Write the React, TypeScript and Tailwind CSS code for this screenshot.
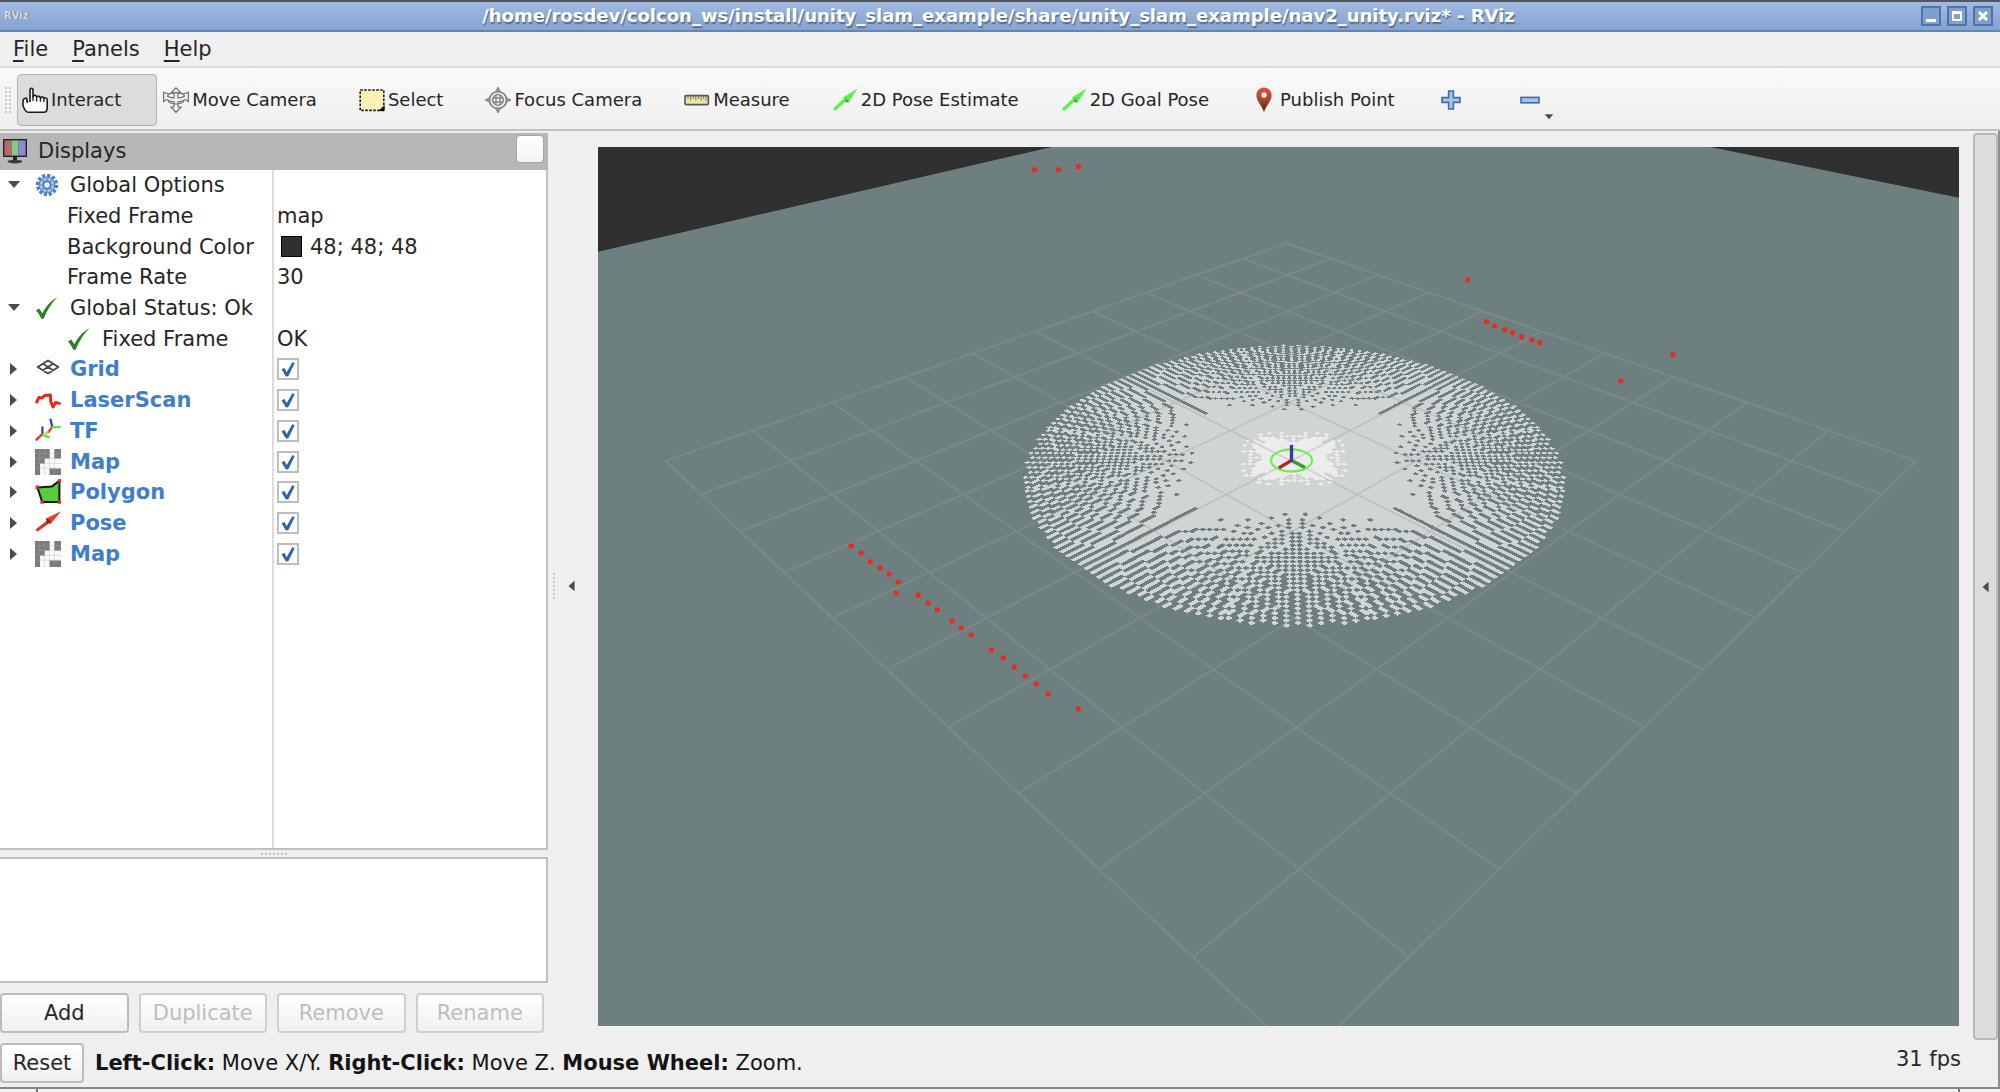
import type { ReactNode } from 'react';
import clsx from 'clsx';

// Ground plane projection. The camera looks along the diagonal of the grid,
// x and y are in metres with the origin in the middle of the grid.
function project(x: number, y: number): [number, number] {
  const s = 10 + x + y;
  const t = x - y;
  const k = 1 / (0.002151 - 0.00006854 * s);
  return [(2.7662 - 0.0875 * s + 0.0916 * t) * k, k - 221.3];
}

const CELL = 0.05;
const RAYS = 180;
const RANGE = 59.5;
const ORIGIN_X = -1;
const ORIGIN_Y = -2;

function castRays() {
  const hits = new Map<string, number>();
  for (let n = 0; n < RAYS; n++) {
    const a = ((n + 0.5) / RAYS) * Math.PI * 2;
    const ex = Math.round(Math.cos(a) * RANGE);
    const ey = Math.round(Math.sin(a) * RANGE);
    let cx = 0;
    let cy = 0;
    const dx = Math.abs(ex);
    const dy = Math.abs(ey);
    const sx = ex > 0 ? 1 : -1;
    const sy = ey > 0 ? 1 : -1;
    let err = dx - dy;
    while (true) {
      const key = `${cx},${cy}`;
      hits.set(key, (hits.get(key) ?? 0) + 1);
      if (cx === ex && cy === ey) break;
      const e2 = err * 2;
      if (e2 > -dy) {
        err -= dy;
        cx += sx;
      }
      if (e2 < dx) {
        err += dx;
        cy += sy;
      }
    }
  }
  return hits;
}

function cellPath(cx: number, cy: number) {
  const x = (cx + ORIGIN_X) * CELL;
  const y = (cy + ORIGIN_Y) * CELL;
  const pts = [project(x, y), project(x + CELL, y), project(x + CELL, y + CELL), project(x, y + CELL)];
  return 'M' + pts.map((p) => `${p[0].toFixed(1)} ${p[1].toFixed(1)}`).join('L') + 'Z';
}

const hits = castRays();
let freePath = '';
let clearPath = '';
hits.forEach((count, key) => {
  const [cx, cy] = key.split(',').map(Number);
  freePath += cellPath(cx, cy);
  if (count >= 3) clearPath += cellPath(cx, cy);
});

let gridPath = '';
for (let i = -5; i <= 5; i++) {
  const ends = [project(i, -5), project(i, 5), project(-5, i), project(5, i)];
  gridPath += `M${ends[0].join(' ')}L${ends[1].join(' ')}M${ends[2].join(' ')}L${ends[3].join(' ')}`;
}

const laserPoints = [
  [1034, 170], [1058, 170], [1078, 167], [1467, 280], [1486, 322], [1494, 326], [1504, 330], [1512, 333],
  [1521, 337], [1531, 340], [1539, 343], [1620, 381], [1672, 355], [851, 546], [861, 553], [870, 562],
  [880, 568], [889, 574], [898, 582], [896, 593], [918, 595], [928, 603], [937, 610], [952, 621],
  [961, 628], [971, 635], [991, 650], [1003, 658], [1014, 667], [1025, 676], [1036, 684], [1048, 694],
  [1078, 709],
];

function Scene() {
  return (
    <svg
      viewBox="598 147 1360 879"
      preserveAspectRatio="xMidYMid slice"
      className="block w-full h-full bg-[#6d807f]">
      <path d="M598 147H1053L598 252Z M1708 147H1958V198Z" fill="#303030" />
      <path d={freePath} fill="#d0d4d5" shapeRendering="crispEdges" />
      <path d={clearPath} fill="#ececec" shapeRendering="crispEdges" />
      <path d={gridPath} fill="none" stroke="#9c9a96" strokeOpacity="0.32" strokeWidth="1.8" />
      {laserPoints.map(([x, y]) => (
        <rect key={`${x}-${y}`} x={x - 2.5} y={y - 2.5} width="5" height="5" rx="1.5" fill="#ea2c20" />
      ))}
      <ellipse cx="1291" cy="460.5" rx="20.5" ry="11" fill="none" stroke="#6bf04a" strokeWidth="2.2" />
      <g strokeWidth="3.4">
        <path d="M1291 460.5L1304.5 467.5" stroke="#3a9a35" />
        <path d="M1291 460.5L1278.5 468" stroke="#b52024" />
        <path d="M1291 461.5V445" stroke="#3a3aa0" />
      </g>
    </svg>
  );
}

/* toolbar icons */

const HandIcon = () => (
  <svg viewBox="0 0 26 26" className="size-[26px] shrink-0">
    <path
      d="M8 15V3.2C8 .6 11 .6 11 3.2V10L11.5 8.6C13 7.8 14.6 8.6 14.6 10C16 8.8 18.2 9.3 18.4 10.8C20 9.6 22 10 22 11.4C24 10.4 25.2 11.2 25.2 13V21C25.2 23.4 24 25.2 21.8 25.2H6C4.4 25.2 3.6 24 2.8 22.6L1 19V14.4C1 12 2.4 11 4.6 11.4L5.4 16"
      fill="#fafafa"
      stroke="#1d1d1d"
      strokeWidth="1.6"
      strokeLinejoin="round"
    />
    <path d="M11 9V14M14.6 10V14.6M18.4 11V14.8M22 11.6V15" stroke="#1d1d1d" strokeWidth="1.3" fill="none" />
  </svg>
);

const MoveIcon = () => (
  <svg viewBox="0 0 26 26" className="size-[26px] shrink-0" fill="none" stroke="#6c6c6c" strokeWidth="1.2">
    <path d="M13 .8L18 6H15V11C17.6 10.8 20 10.2 21.4 9.2L20.4 7L25.4 5.4V14.6L22.6 12.6C20.4 14 17.6 14.6 15 14.8V20H18L13 25.4L8 20H11V14.8C8.4 14.6 5.6 14 3.4 12.6L.6 14.6V5.4L5.6 7L4.6 9.2C6 10.2 8.4 10.8 11 11V6H8Z" fill="#f6f6f6" />
    <path d="M5 8C7 4.8 19 4.8 21 8M5 14C8 18 18 18 21 14" />
  </svg>
);

const SelectIcon = () => (
  <svg viewBox="0 0 26 26" className="size-[26px] shrink-0">
    <rect x="1.2" y="3" width="23.6" height="20.4" fill="#fbf3b4" stroke="#1a1a1a" strokeWidth="1.6" strokeDasharray="2.6 1.4" />
    <path d="M25.5 18V24H19.5Z" fill="#000" />
  </svg>
);

const FocusIcon = () => (
  <svg viewBox="0 0 26 26" className="size-[26px] shrink-0" fill="none" stroke="#868686" strokeWidth="1.5">
    <circle cx="13" cy="13" r="8.6" stroke="#777" fill="#f0f0f0" />
    <circle cx="13" cy="13" r="5.4" />
    <path d="M8 11H18M8 15H18M11 8V18M15 8V18" strokeWidth="1.3" />
    <path d="M13 .6L14.8 4.6H11.2ZM13 25.4L14.8 21.4H11.2ZM.6 13L4.6 11.2V14.8ZM25.4 13L21.4 11.2V14.8Z" fill="#ddd" />
  </svg>
);

const MeasureIcon = () => (
  <svg viewBox="0 0 26 26" className="size-[26px] shrink-0">
    <rect x="1" y="8.6" width="23.4" height="9" rx="1" fill="#eee3a0" stroke="#55565e" strokeWidth="1.6" />
    <path d="M4 9V12M6.6 9V13.4M9.2 9V12M11.8 9V13.4M14.4 9V12M17 9V13.4M19.6 9V12M22 9V13.4" stroke="#77757a" strokeWidth="1" />
  </svg>
);

const GoalArrowIcon = () => (
  <svg viewBox="0 0 26 26" className="size-[26px] shrink-0">
    <path d="M1 21.4L11.6 11.8L14 14.2L3 24Z" fill="#5af447" />
    <path d="M11 10.4L25.4 1.6L16.6 15.8L13.8 13.6Z" fill="#5cf04a" />
    <path d="M11 10.4L13.6 12L13 14.6L16.6 15.8L15 12Z" fill="#37a12e" />
  </svg>
);

const PinIcon = () => (
  <svg viewBox="0 0 26 26" className="size-[26px] shrink-0">
    <defs>
      <linearGradient id="pin" x1="0" y1="0" x2="0" y2="1">
        <stop offset="0" stopColor="#d8563c" />
        <stop offset="0.5" stopColor="#a8452f" />
        <stop offset="1" stopColor="#4a2818" />
      </linearGradient>
    </defs>
    <path d="M13 25.4C12 20 5.4 14.6 5.4 8.2C5.4 3.8 8.8.6 13 .6S20.6 3.8 20.6 8.2C20.6 14.6 14 20 13 25.4Z" fill="url(#pin)" />
    <circle cx="13" cy="8" r="2.7" fill="#f6f1ee" />
  </svg>
);

const PlusIcon = () => (
  <svg viewBox="0 0 20 20" className="size-5">
    <path d="M7.6 1H12.4V7.6H19V12.4H12.4V19H7.6V12.4H1V7.6H7.6Z" fill="#a9c3e4" stroke="#3b6cab" strokeWidth="1.6" />
  </svg>
);

const MinusIcon = () => (
  <svg viewBox="0 0 20 20" className="size-5">
    <rect x="1" y="7.4" width="18" height="5.4" fill="#a9c3e4" stroke="#3b6cab" strokeWidth="1.6" />
  </svg>
);

/* tree icons */

const MonitorIcon = () => (
  <svg viewBox="0 0 26 26" className="size-[26px] shrink-0">
    <rect x="1" y="1" width="24" height="18" fill="#222" />
    <path d="M2.4 2.4H9.4V17.6H2.4Z" fill="#b86a6a" />
    <path d="M9.4 2.4H16.6V17.6H9.4Z" fill="#86c886" />
    <path d="M16.6 2.4H23.6V17.6H16.6Z" fill="#8a8ad8" />
    <path d="M11 19H15V22H11Z" fill="#222" />
    <ellipse cx="13" cy="23.6" rx="7.4" ry="1.8" fill="#3a3a3a" />
  </svg>
);

const GearIcon = () => (
  <svg viewBox="0 0 24 24" className="size-6 shrink-0">
    <circle cx="12" cy="12" r="9.4" fill="none" stroke="#4d80c2" strokeWidth="3.6" strokeDasharray="3.1 1.8" />
    <circle cx="12" cy="12" r="8" fill="#9dbfe8" stroke="#4a7dbf" strokeWidth="1" />
    <circle cx="12" cy="12" r="3.6" fill="#e8f0fa" stroke="#4a7dbf" strokeWidth="1.8" />
    <path d="M12 5V8M12 16V19M5 12H8M16 12H19M7 7L9 9M17 7L15 9M7 17L9 15M17 17L15 15" stroke="#5f8fcc" strokeWidth="1.2" />
  </svg>
);

const CheckIcon = () => (
  <svg viewBox="0 0 24 24" className="size-6 shrink-0">
    <path d="M1 14.4L4.2 12.4L7.4 17.2C11 10.4 15 5.6 22.6 1C16.4 7.6 12.6 13.4 8.6 22.8H6.2C5 19.6 3.4 17 1 14.4Z" fill="#2f7d27" />
  </svg>
);

const GridIcon = () => (
  <svg viewBox="0 0 26 26" className="size-[26px] shrink-0" fill="none" stroke="#484848" strokeWidth="1.8">
    <path d="M2.6 11L13 4.4L23.4 11L13 17.6ZM7.8 7.7L18.2 14.3M18.2 7.7L7.8 14.3" strokeLinejoin="round" />
  </svg>
);

const LaserIcon = () => (
  <svg viewBox="0 0 26 26" className="size-[26px] shrink-0" fill="none" stroke="#e9281c" strokeWidth="3" strokeLinejoin="round" strokeLinecap="round">
    <path d="M1.8 15L4 10.4L7 11L9.6 8.6L15.4 8L15.8 14.6L18 20L20.6 15.4L24.4 16.4" />
  </svg>
);

const TfIcon = () => (
  <svg viewBox="0 0 26 26" className="size-[26px] shrink-0" fill="none" strokeWidth="2.2">
    <path d="M7 16.4L.8 22.4M17 9L13 14.8" stroke="#e33126" />
    <path d="M7.4 16V8.4M17.2 8.6L15.4.8" stroke="#3a2fe0" />
    <path d="M7 16.6L14.6 19.4M17 9.2H25.6" stroke="#57e63a" />
    <path d="M13.4 13.4L10.4 16" stroke="#f2b233" />
  </svg>
);

const MapIcon = () => (
  <svg viewBox="0 0 26 26" className="size-[26px] shrink-0">
    <rect width="26" height="26" fill="#fafafa" />
    <path d="M4.8 0V26M9.6 0V26M14.4 0V26M19.2 0V26M0 4.8H26M0 9.6H26M0 14.4H26M0 19.2H26" stroke="#d6d6d6" strokeWidth="0.8" />
    <path d="M0 0H14.6V9.6H9.6V14.6H5V26H0ZM19.4 0H26V9.6H19.4ZM14.6 19.4H26V26H14.6Z" fill="#7c7c7c" />
    <path d="M4.8 0V14.4M9.6 0V9.6M0 4.8H14.4M0 9.6H9.6M0 14.4H4.8M0 19.2H4.8M19.4 4.8H26M19.2 19.4V26" stroke="#929292" strokeWidth="0.8" />
  </svg>
);

const PolygonIcon = () => (
  <svg viewBox="0 0 26 26" className="size-[26px] shrink-0">
    <path d="M2.4 8.4L17 7.4L24.4 1.8V23H7.2Z" fill="#57cc3c" stroke="#161616" strokeWidth="2" />
    <path d="M.6 6.6H4V10H.6ZM22.8.2H26V3.6H22.8ZM5.4 21.4H8.8V24.8H5.4ZM22.6 21.4H26V24.8H22.6Z" fill="#e9281c" />
  </svg>
);

const PoseIcon = () => (
  <svg viewBox="0 0 26 26" className="size-[26px] shrink-0">
    <path d="M.6 19.4L12 10.6L14 13.2L2.4 21.8Z" fill="#e0301f" />
    <path d="M11 8.6L26 1.2L15.8 13.8L13 12.4Z" fill="#ec3a26" />
    <path d="M11 8.6L14.4 9.8L15.8 13.8L11.8 12.6Z" fill="#8d1f14" />
  </svg>
);

function Triangle({ dir, className }: { dir: 'down' | 'right' | 'left'; className?: string }) {
  const d = { down: 'M1 3H13L7 10Z', right: 'M3 1L10 7L3 13Z', left: 'M10 1L3 7L10 13Z' }[dir];
  return (
    <svg viewBox="0 0 14 14" className={clsx('shrink-0', className ?? 'size-[14px]')}>
      <path d={d} fill="#4b4b4b" />
    </svg>
  );
}

const tools: { label: string; icon: ReactNode; active?: boolean }[] = [
  { label: 'Interact', icon: <HandIcon />, active: true },
  { label: 'Move Camera', icon: <MoveIcon /> },
  { label: 'Select', icon: <SelectIcon /> },
  { label: 'Focus Camera', icon: <FocusIcon /> },
  { label: 'Measure', icon: <MeasureIcon /> },
  { label: '2D Pose Estimate', icon: <GoalArrowIcon /> },
  { label: '2D Goal Pose', icon: <GoalArrowIcon /> },
  { label: 'Publish Point', icon: <PinIcon /> },
];

type Row = {
  label: string;
  icon?: ReactNode;
  arrow?: 'down' | 'right';
  value?: ReactNode;
  display?: boolean;
  nested?: boolean;
};

const rows: Row[] = [
  { label: 'Global Options', icon: <GearIcon />, arrow: 'down' },
  { label: 'Fixed Frame', value: 'map' },
  {
    label: 'Background Color',
    value: (
      <>
        <span className="size-[21px] ml-1 mr-2 bg-[#303030] border border-black" />
        48; 48; 48
      </>
    ),
  },
  { label: 'Frame Rate', value: '30' },
  { label: 'Global Status: Ok', icon: <CheckIcon />, arrow: 'down' },
  { label: 'Fixed Frame', icon: <CheckIcon />, nested: true, value: 'OK' },
  { label: 'Grid', icon: <GridIcon />, arrow: 'right', display: true },
  { label: 'LaserScan', icon: <LaserIcon />, arrow: 'right', display: true },
  { label: 'TF', icon: <TfIcon />, arrow: 'right', display: true },
  { label: 'Map', icon: <MapIcon />, arrow: 'right', display: true },
  { label: 'Polygon', icon: <PolygonIcon />, arrow: 'right', display: true },
  { label: 'Pose', icon: <PoseIcon />, arrow: 'right', display: true },
  { label: 'Map', icon: <MapIcon />, arrow: 'right', display: true },
];

function TreeRow({ row, id }: { row: Row; id: string }) {
  return (
    <li className="flex items-center whitespace-nowrap">
      <div
        className={clsx(
          'flex items-center w-[273px] shrink-0',
          row.nested ? 'pl-[67px]' : row.icon ? 'pl-[7px]' : 'pl-[67px]',
        )}>
        {row.arrow && (
          <span className="w-7 shrink-0">
            <Triangle dir={row.arrow} />
          </span>
        )}
        {row.icon && <span className="w-[35px] shrink-0">{row.icon}</span>}
        {row.display ? (
          <label htmlFor={id} className="font-bold text-[#3f7ecb]">
            {row.label}
          </label>
        ) : (
          <span>{row.label}</span>
        )}
      </div>
      <div className="flex items-center flex-1 pl-1">
        {row.value}
        {row.display && (
          <span className="relative size-[22px]">
            <input
              id={id}
              type="checkbox"
              defaultChecked
              className="peer block size-[22px] appearance-none bg-white border-2 border-[#bdbdbd]"
            />
            <svg
              viewBox="0 0 22 22"
              className="absolute inset-0 size-[22px] pointer-events-none invisible peer-checked:visible">
              <path d="M5 11.4L7.4 10.4L9.6 15L15.6 4.6L17.2 5.4L11 18H9Z" fill="#2a62a8" stroke="#2a62a8" strokeWidth="0.8" />
            </svg>
          </span>
        )}
      </div>
    </li>
  );
}

const panelButton =
  'flex-1 h-10 rounded-[4px] border-2 bg-linear-to-b from-white to-[#f0f0f0] border-[#bcbcbc] disabled:border-[#cfcfcf] disabled:text-[#bebebe]';

function DisplaysPanel() {
  return (
    <aside className="flex flex-col w-[548px] shrink-0">
      <header className="flex items-center h-[37px] shrink-0 pl-[2px] pr-1 pb-[2px] bg-[#b7b7b7]">
        <MonitorIcon />
        <h2 className="ml-[10px] flex-1">Displays</h2>
        <button
          aria-label="Close panel"
          className="size-7 mb-1 rounded-[4px] border border-[#a5a5a5] bg-linear-to-b from-white to-[#f4f4f4]"
        />
      </header>
      <div className="flex flex-1 min-h-0 bg-[linear-gradient(#dcdcdc,#dcdcdc)] bg-size-[2px_100%] bg-position-[272px_0] bg-no-repeat bg-white border-r-2 border-b-2 border-[#c0c0c0]">
        <ul className="grid auto-rows-fr w-full h-[399px]">
          {rows.map((row, i) => (
            <TreeRow key={i} row={row} id={`display-${i}`} />
          ))}
        </ul>
      </div>
      <div className="h-[7px] shrink-0 flex justify-center items-center">
        <span className="w-[26px] border-t-2 border-dotted border-[#c4c4c4]" />
      </div>
      <div className="h-[126px] shrink-0 bg-white border-2 border-l-0 border-[#c0c0c0]" />
      <div className="flex gap-[10px] pr-1 mt-[10px] shrink-0">
        <button className={panelButton}>Add</button>
        <button className={panelButton} disabled>
          Duplicate
        </button>
        <button className={panelButton} disabled>
          Remove
        </button>
        <button className={panelButton} disabled>
          Rename
        </button>
      </div>
    </aside>
  );
}

const winButton = 'flex items-center justify-center size-5 border-2 border-[#4d74a8] bg-[#7f9fcd]';

function TitleBar() {
  return (
    <header className="flex items-center gap-[6px] h-8 shrink-0 pr-[7px] border-t-2 border-b-2 border-t-[#53565f] border-b-[#6484b4] bg-linear-to-b from-[#a0bae2] to-[#84a3d0]">
      <span className="w-[76px] pl-1 text-[10px] leading-none font-bold text-[#d5d9e0] [text-shadow:1px_0_0_#77777a]">
        RViz
      </span>
      <h1 className="flex-1 text-center text-[18px] font-bold text-white whitespace-nowrap [text-shadow:1px_2px_1px_#5a6d8c]">
        /home/rosdev/colcon_ws/install/unity_slam_example/share/unity_slam_example/nav2_unity.rviz* - RViz
      </h1>
      <button aria-label="Minimize" className={winButton}>
        <span className="w-[10px] h-[3px] mt-2 bg-white" />
      </button>
      <button aria-label="Maximize" className={winButton}>
        <span className="w-[10px] h-[10px] border-2 border-t-[3px] border-white" />
      </button>
      <button aria-label="Close" className={winButton}>
        <svg viewBox="0 0 12 12" className="size-3">
          <path d="M2 2L10 10M10 2L2 10" stroke="#fff" strokeWidth="3" />
        </svg>
      </button>
    </header>
  );
}

export default function App() {
  return (
    <div className="flex flex-col h-screen overflow-hidden bg-[#efefef] text-[#262626] text-[21px] leading-[26px] font-['DejaVu_Sans',sans-serif]">
      <TitleBar />
      <nav className="flex items-center gap-6 h-9 shrink-0 px-[13px] border-b-2 border-[#dcdcdc]">
        {['File', 'Panels', 'Help'].map((item) => (
          <button key={item} className="underline-offset-4 decoration-2">
            <span className="underline">{item[0]}</span>
            {item.slice(1)}
          </button>
        ))}
      </nav>
      <div className="flex items-center h-[63px] shrink-0 pl-1 pt-[2px] border-b-2 border-[#c2c2c2] bg-linear-to-b from-[#fafafa] to-[#efefef] text-[18px]">
        <span className="w-2 h-7 mr-[5px] bg-[radial-gradient(#c8c8c8_1px,transparent_1px)] bg-size-[4px_4px]" />
        {tools.map((tool) => (
          <button
            key={tool.label}
            className={clsx(
              'flex items-center gap-[3px] h-[52px] mr-px pl-1 pr-[35px] rounded-[4px] border whitespace-nowrap',
              tool.active ? 'bg-[#dcdcdc] border-[#b2b2b2]' : 'border-transparent',
            )}>
            {tool.icon}
            {tool.label}
          </button>
        ))}
        <button aria-label="Add tool" className="ml-[5px] p-1">
          <PlusIcon />
        </button>
        <button aria-label="Remove tool" className="relative ml-[51px] p-1">
          <MinusIcon />
          <Triangle dir="down" className="size-[10px] absolute -right-[10px] -bottom-2" />
        </button>
      </div>
      <div className="flex flex-1 min-h-0 pt-[2px] border-r-2 border-[#8d8d92]">
        <div className="flex flex-col shrink-0">
          <div className="flex flex-1 min-h-0">
            <DisplaysPanel />
            <button
              aria-label="Hide left dock"
              className="flex items-center gap-[10px] w-[50px] shrink-0 pl-1 pt-[6px]">
              <span className="w-1 h-7 bg-[radial-gradient(#c8c8c8_1px,transparent_1px)] bg-size-[4px_4px]" />
              <Triangle dir="left" className="size-3" />
            </button>
          </div>
          <div className="h-[59px] shrink-0" />
        </div>
        <main className="flex flex-col flex-1 min-w-0 pt-[14px]">
          <div className="flex-1 min-h-0">
            <Scene />
          </div>
          <div className="h-[66px] shrink-0" />
        </main>
        <button
          aria-label="Hide right dock"
          className="flex items-center justify-center w-[25px] ml-[14px] mb-[52px] shrink-0 rounded-[4px] border-2 border-[#b9b9b9] bg-[#dcdcdc]">
          <Triangle dir="left" className="size-3" />
        </button>
      </div>
      <footer className="flex items-center shrink-0 -mt-[54px] h-[49px] border-r-2 border-[#8d8d92]">
        <button className="w-[84px] h-10 rounded-[4px] border-2 border-[#bcbcbc] bg-linear-to-b from-white to-[#f0f0f0]">
          Reset
        </button>
        <p className="ml-[11px] text-[#141414] whitespace-nowrap">
          <b>Left-Click:</b> Move X/Y. <b>Right-Click:</b> Move Z. <b>Mouse Wheel:</b> Zoom.
        </p>
        <span className="ml-auto mb-2 mr-[37px]">31 fps</span>
      </footer>
      <div className="h-[5px] shrink-0 border-t-2 border-[#85858a] bg-[#f2f2f2] pl-9 pr-10">
        <div className="h-full border-x-2 border-[#77777c]" />
      </div>
    </div>
  );
}
